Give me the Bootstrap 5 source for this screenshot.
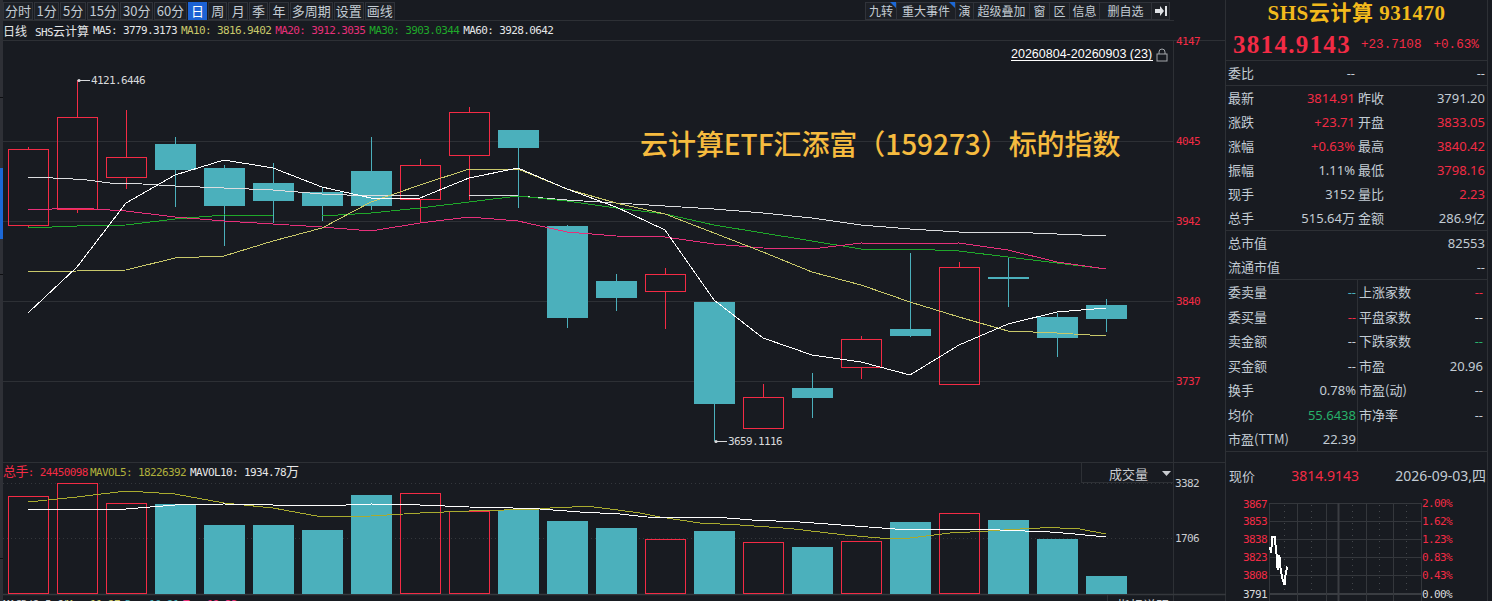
<!DOCTYPE html>
<html lang="zh">
<head>
<meta charset="utf-8">
<title>SHS云计算 931470</title>
<link href="https://cdn.jsdelivr.net/npm/bootstrap@5.3.0/dist/css/bootstrap.min.css" rel="stylesheet">
<style>
html,body{height:601px;overflow:hidden;background:#181b21}
body{font-family:"Noto Sans","Noto Sans CJK SC",sans-serif;font-size:13px;color:#c3ccd4}
.stage{width:1492px;height:601px}
.leftcol{width:1226px;flex:none;position:relative;border-right:1px solid #2d3035}
.edge{position:absolute;left:0;top:0;bottom:0;width:3px;background:#2e3036}
.edge i{position:absolute;left:0;width:3px;height:1px;background:#0d0e11}
.edge b{position:absolute;left:0;top:168px;height:71px;width:3px;background:#1c68d6}
.toolbar{height:21px;width:1174px;padding:2px 4px 0 3px;border-bottom:1px solid #2d3035;gap:1px;font-family:"Noto Sans CJK SC",sans-serif}
.tb{--bs-btn-padding-x:1px;--bs-btn-padding-y:0;--bs-btn-font-size:13px;--bs-btn-color:#c3ccd4;--bs-btn-bg:#1d2026;--bs-btn-border-color:#30333a;--bs-btn-border-radius:0;--bs-btn-hover-color:#c3ccd4;--bs-btn-hover-bg:#1d2026;--bs-btn-hover-border-color:#30333a;--bs-btn-line-height:16px;height:18px;white-space:nowrap;position:relative}
.tb.dg{--bs-btn-padding-x:1.6px}
.tb.one{--bs-btn-padding-x:2.2px}
.tb.on{--bs-btn-bg:#1c62d4;--bs-btn-color:#fff;--bs-btn-hover-bg:#1c62d4;--bs-btn-hover-color:#fff;--bs-btn-border-color:#1c62d4}
.tsm{--bs-btn-font-size:12px;margin-left:-1px;padding-left:0;padding-right:0;text-align:center}
.w32{width:32px}.w60{width:60px}.w19{width:19px}.w57{width:57px}.w21{width:21px}.w31{width:31px}.w53{width:53px}
.flag::after{content:"";position:absolute;top:-1px;right:-1px;border-top:7px solid #1c68d6;border-left:7px solid transparent}
.infobar{height:20px;padding-left:3px;gap:4px;font-size:12px;line-height:20px;white-space:nowrap;font-family:"DejaVu Sans Mono","Noto Sans CJK SC",monospace}
.monof{font-size:11px;letter-spacing:-.62px}
.cjkf{font-family:"Noto Sans CJK SC",sans-serif;font-size:12px;letter-spacing:0}
.c-w{color:#e4e6e8}.c-y{color:#c8c86a}.c-p{color:#e6307a}.c-g{color:#1fa82a}.c-r{color:#f32b45}.c-t{color:#27b06a}.c-c{color:#4bb0bc}
.chartwrap{position:relative;height:560px;border-top:1px solid #2d3035;margin-top:-1px}
.chartwrap svg{display:block;overflow:visible}
.watermark{position:absolute;left:640px;top:84px;font:500 28px/36px "Noto Sans CJK SC",sans-serif;color:#f6bb3f;white-space:nowrap;letter-spacing:-.05px}
.svgm{font-family:"DejaVu Sans Mono",monospace;font-size:11px;letter-spacing:-.62px}
.svgc{font-family:"Noto Sans CJK SC",sans-serif;font-size:13px}
.datelink{font-family:"Liberation Sans",sans-serif;font-size:12.5px}
.side{width:262px;flex:none;border-right:1px solid #2d3035}
.titlebox{height:30px;font:bold 21px/27px "Liberation Serif","Noto Sans CJK SC",serif;letter-spacing:.55px;color:#f2b91c;white-space:nowrap}
.pricebox{height:31px;padding-left:7px;border-bottom:1px solid #2d3035;color:#f32b45;font-family:"Liberation Mono",monospace;white-space:nowrap}
.bigp{font:bold 25px/30px "Liberation Serif",serif;letter-spacing:1.3px;width:128px}
.smp{font-size:12.6px;line-height:30px}
.sec{border-bottom:1px solid #2d3035;padding:0 2px}
.rw{height:24px;line-height:24px;white-space:nowrap}
.lb{font-family:"Noto Sans CJK SC",sans-serif}
.v1{width:101px;text-align:right;flex:none;margin-right:3px}
.v2{flex:1;text-align:right}
.lab{width:26px;flex:none}
.rh{height:24.5px;line-height:24.5px}
.cell{width:130px;flex:none;padding-right:1px;border-right:1px solid #2d3035}
.cellr{flex:1;padding-left:1px}
.now{height:45px;padding:12px 1px 0 3px;line-height:24px;white-space:nowrap;font-size:14px}
.now .lb{font-size:13px}
</style>
</head>
<body>
<div class="stage d-flex">
  <div class="leftcol">
    <div class="edge"><b></b><i style="top:97px"></i><i style="top:274px"></i><i style="top:558px"></i></div>
    <div class="toolbar d-flex align-items-start">
      <button class="btn tb">分时</button><button class="btn tb dg">1分</button><button class="btn tb dg">5分</button><button class="btn tb dg">15分</button><button class="btn tb dg">30分</button><button class="btn tb dg">60分</button><button class="btn tb one on">日</button><button class="btn tb one">周</button><button class="btn tb one">月</button><button class="btn tb one">季</button><button class="btn tb one">年</button><button class="btn tb">多周期</button><button class="btn tb">设置</button><button class="btn tb">画线</button>
      <div class="ms-auto d-flex">
        <button class="btn tb tsm flag w32">九转</button><button class="btn tb tsm flag w60">重大事件</button><button class="btn tb tsm w19">演</button><button class="btn tb tsm w57">超级叠加</button><button class="btn tb tsm w21">窗</button><button class="btn tb tsm w21">区</button><button class="btn tb tsm w31">信息</button><button class="btn tb tsm w53">删自选</button><button class="btn tb tsm w19"><svg width="12" height="12" viewBox="0 0 12 12" class="d-block mx-auto"><path d="M0 4h5V1l4 5-4 5V8H0z" fill="#dfe2e6"/><rect x="10" y="1" width="2" height="10" fill="#dfe2e6"/></svg></button>
      </div>
    </div>
    <div class="infobar d-flex monof">
      <span class="cjkf c-w me-1">日线</span>
      <span class="c-w"><span class="me-0">SHS</span><span class="cjkf">云计算</span></span>
      <span class="c-w">MA5: 3779.3173</span>
      <span class="c-y">MA10: 3816.9402</span>
      <span class="c-p">MA20: 3912.3035</span>
      <span class="c-g">MA30: 3903.0344</span>
      <span class="c-w">MA60: 3928.0642</span>
    </div>
    <div class="chartwrap">
      <svg id="chart" width="1225" height="560" viewBox="0 41 1225 560"></svg>
      <div class="watermark">云计算ETF汇添富（159273）标的指数</div>
    </div>
  </div>
  <div class="side">
    <div class="titlebox text-center">SHS云计算 931470</div>
    <div class="pricebox d-flex"><span class="bigp">3814.9143</span><span class="smp me-2">+23.7108</span><span class="smp ms-1">+0.63%</span></div>
    <div class="sec"><div class="rw d-flex"><span class="lb lab">委比</span><span class="v1">--</span><span class="lab"></span><span class="v2">--</span></div></div>
    <div class="sec" id="s1"></div>
    <div class="sec">
      <div class="rw d-flex justify-content-between"><span class="lb">总市值</span><span>82553</span></div>
      <div class="rw d-flex justify-content-between"><span class="lb">流通市值</span><span>--</span></div>
    </div>
    <div class="sec d-flex pe-0" style="height:172px">
      <div class="cell" id="c1"></div>
      <div class="cellr flex-fill pe-1" id="c2"></div>
    </div>
    <div class="now d-flex justify-content-between"><span class="lb">现价</span><span class="c-r">3814.9143</span><span>2026-09-03,四</span></div>
    <svg id="mini" width="261" height="104" viewBox="1227 497 261 104" class="d-block"></svg>
  </div>
</div>
<script src="https://cdn.jsdelivr.net/npm/bootstrap@5.3.0/dist/js/bootstrap.bundle.min.js"></script>
<script>
var R='#f32b45',T='#4bb0bc',G='#2d3035',s='';
function L(x1,y1,x2,y2,c,extra){s+='<line x1="'+x1+'" y1="'+y1+'" x2="'+x2+'" y2="'+y2+'" stroke="'+c+'" '+(extra||'')+'/>';}
function P(p,c,w){s+='<polyline fill="none" stroke="'+c+'" stroke-width="'+(w||1)+'" shape-rendering="crispEdges" points="'+p.map(function(a){return a[0]+','+a[1]}).join(' ')+'"/>';}
function X(t,x,y,c,cls,anchor){s+='<text x="'+x+'" y="'+y+'" fill="'+c+'" class="'+(cls||'svgm')+'"'+(anchor?' text-anchor="'+anchor+'"':'')+'>'+t+'</text>';}
[141,221,301,381].forEach(function(y){L(3,y+.5,1173,y+.5,G)});
L(3,462.5,1226,462.5,G);
L(1173.5,41,1173.5,601,G);
[483.5,538.5].forEach(function(y){L(3,y,1173,y,'#34373c','stroke-dasharray="1 3"')});
L(3,594.5,1226,594.5,'#35383d','stroke-width="1.5"');
var cd=[['r',149,225,147,228],['r',117,209,80,213],['r',157,177,110,189],['t',144,170,137,207],['t',168,206,165,246],['t',183,201,163,223],['t',192,206,187,221],['t',171,206,137,210],['r',165,199,159,223],['r',112,155,107,200],['t',130,148,130,208],['t',226,318,225,328],['t',281,298,274,311],['r',274,291,268,329],['t',302,404,302,441],['r',397,428,384,428],['t',388,398,373,418],['r',339,367,336,379],['t',329,336,253,337],['r',267,384,262,385],['t',277,279,258,307],['t',317,338,313,357],['t',305,319,299,332]];
cd.forEach(function(c,i){var l=8+49*i,m=l+20.5,col=c[0]=='r'?R:T;
 if(c[3]<c[1])L(m,c[3],m,c[1],col);
 if(c[4]>c[2])L(m,c[2],m,c[4],col);
 if(c[0]=='r')s+='<rect x="'+(l+.5)+'" y="'+(c[1]+.5)+'" width="40" height="'+(c[2]-c[1])+'" fill="none" stroke="'+R+'"/>';
 else s+='<rect x="'+l+'" y="'+c[1]+'" width="41" height="'+(c[2]-c[1])+'" fill="'+T+'"/>';
});
function mk(a){return a.map(function(y,i){return [28+49*i,y]})}
P([[28,177],[53,178],[83,179.5],[110,183],[126,183],[175,186],[224,188],[273,190],[322,194],[371,196],[420,195],[469,195],[518,196],[567,200],[616,203],[665,206],[714,209],[763,213],[812,218],[861,225],[910,229],[959,232],[1008,232],[1057,234],[1106,236]],'#dcdee0');
P(mk([228,226,225,219,215,216,216,213,208,202,196,201,208,214,225,233,241,249,249,251,257,263,269]),'#1fa82a');
P(mk([210,208,211,217,221,224,227,231,223,217,221,232,236,237,244,248,249,243,244,243,250,262,269]),'#e6307a');
P(mk([272,271,270,258,256,241,228,202,185,169,169,189,203,214,233,252,272,285,302,317,331,333,336]),'#c8c86a');
P(mk([313,267,203,175,160,168,187,198,198,178,168,189,207,230,300,338,355,362,375,345,324,312,308]),'#ffffff');
X('4121.6446',91,84,'#d8dadc');L(78,80.5,90,80.5,'#d8dadc');s+='<circle cx="79" cy="80.5" r="1.6" fill="#d8dadc"/>';
X('3659.1116',728,445,'#d8dadc');L(715,441.5,727,441.5,'#d8dadc');s+='<circle cx="716" cy="441.5" r="1.6" fill="#d8dadc"/>';
X('20260804-20260903 (23)',1011,58,'#ffffff','datelink');L(1011,60.5,1153,60.5,'#ffffff');
s+='<rect x="1157" y="54" width="10" height="7" fill="none" stroke="#a3a7ab"/><path d="M1159 54v-2a3 3 0 0 1 6 0v2" fill="none" stroke="#a3a7ab"/>';
[['4147',45],['4045',145],['3942',225],['3840',305],['3737',385]].forEach(function(a){X(a[0],1176,a[1],R)});
X('3382',1175,487,'#c9ccd0');X('1706',1175,542,'#c9ccd0');
s+='<text y="476" class="svgm"><tspan x="3" fill="'+R+'" class="svgc" font-size="12">总手</tspan><tspan fill="'+R+'">: 24450098</tspan><tspan x="90" fill="#b0b03c">MAVOL5: 18226392</tspan><tspan x="190" fill="#e8e8e8">MAVOL10: 1934.78</tspan><tspan fill="#e8e8e8" class="svgc" font-size="12">万</tspan></text>';
L(1081.5,462,1081.5,482,G);L(1081,482.5,1173,482.5,G);
X('成交量',1109,479,'#c9ccd0','svgc');s+='<path d="M1162 471h9l-4.5 5z" fill="#c9ccd0"/>';
L(1107.5,595,1107.5,601,G);
var vt=[496,483,503,504,525,525,530,495,493,511,510,521,528,539,531,542,547,541,522,513,520,539,576];
vt.forEach(function(y,i){var l=8+49*i;var red=cd[i][0]=='r';
 if(red)s+='<rect x="'+(l+.5)+'" y="'+(y+.5)+'" width="40" height="'+(593-y)+'" fill="none" stroke="'+R+'"/>';
 else s+='<rect x="'+l+'" y="'+y+'" width="41" height="'+(594-y)+'" fill="'+T+'"/>';
});
P([[28,502],[77,497],[126,491],[175,494],[224,503],[273,508],[322,517],[371,516],[420,513],[469,511],[540,509],[555,507.5],[590,506.5],[610,509],[640,513],[660,517],[680,520],[700,523],[740,525],[790,528.5],[820,532],[845,535],[880,538],[910,538],[950,533],[980,531.5],[1020,529],[1050,527.5],[1080,529],[1106,534]],'#a9ab2f');
P([[28,509],[126,509],[175,505],[224,504],[322,506],[371,504],[420,505],[469,507],[500,507.5],[540,509],[580,512],[620,514],[647,517],[727,518],[752,520],[800,522],[855,526],[902,529.5],[1000,530],[1050,532],[1075,534],[1106,537]],'#ffffff');
s+='<text y="608" class="svgm"><tspan x="3" fill="#c9ccd0">MACD(2,5,6)</tspan><tspan x="66" fill="#c8c86a">M: -11.27</tspan><tspan x="125" fill="#4bb0bc">D: -10.21</tspan><tspan x="183" fill="#e6307a">T: -12.33</tspan></text>';
X('指标说明',1117,610,'#c9ccd0','svgc');
document.getElementById('chart').innerHTML=s;

s='';
[503.5,521.5,539.5,557.5,575.5].forEach(function(y){L(1270,y,1422,y,'#34373c')});
L(1270,594,1422,594,'#3a3d42','stroke-width="2"');
[1270.5,1298.5,1327.5,1367.5,1394.5,1422.5].forEach(function(x){L(x,503,x,601,'#34373c')});
L(1339.5,503,1339.5,601,'#3a3d42','stroke-width="2"');
[1285.5,1312.5,1353.5,1380.5,1407.5].forEach(function(x){L(x,505,x,594,'#44474c','stroke-dasharray="1 5"')});
[['3867',508,R],['3853',525,R],['3838',543,R],['3823',561,R],['3808',579,R],['3791',598,'#d8dadc']].forEach(function(a){X(a[0],1268,a[1],a[2],'svgm','end')});
[['2.00%',507,R],['1.62%',525,R],['1.23%',543,R],['0.83%',561,R],['0.43%',579,R],['0.00%',598,'#d8dadc']].forEach(function(a){X(a[0],1423,a[1],a[2])});
P([[153,290],[156,310],[160,262],[167,262],[172,305],[176,360],[181,315],[185,360],[190,385],[197,405],[200,370],[205,350]].map(function(a){return [a[0]/3+1220,a[1]/3+450]}),'#ffffff',2);
document.getElementById('mini').innerHTML=s;

function rw(a,b,bc,c,d,dc){return '<div class="rw d-flex"><span class="lb lab">'+a+'</span><span class="v1 '+(bc||'')+'">'+b+'</span><span class="lb lab">'+c+'</span><span class="v2 '+(dc||'')+'">'+d+'</span></div>'}
document.getElementById('s1').innerHTML=[['最新','3814.91','c-r','昨收','3791.20',''],['涨跌','+23.71','c-r','开盘','3833.05','c-r'],['涨幅','+0.63%','c-r','最高','3840.42','c-r'],['振幅','1.11%','','最低','3798.16','c-r'],['现手','3152','','量比','2.23','c-r'],['总手','515.64万','','金额','286.9亿','']].map(function(r){return rw.apply(null,r)}).join('');
function cl(rows){return rows.map(function(r){return '<div class="rh d-flex justify-content-between"><span class="lb">'+r[0]+'</span><span class="'+(r[2]||'')+'">'+r[1]+'</span></div>'}).join('')}
document.getElementById('c1').innerHTML=cl([['委卖量','--','c-c'],['委买量','--','c-r'],['卖金额','--'],['买金额','--'],['换手','0.78%'],['均价','55.6438','c-t'],['市盈(TTM)','22.39']]);
document.getElementById('c2').innerHTML=cl([['上涨家数','--','c-r'],['平盘家数','--','c-w'],['下跌家数','--','c-t'],['市盈','20.96'],['市盈(动)','--'],['市净率','--']]);
</script>
</body>
</html>
